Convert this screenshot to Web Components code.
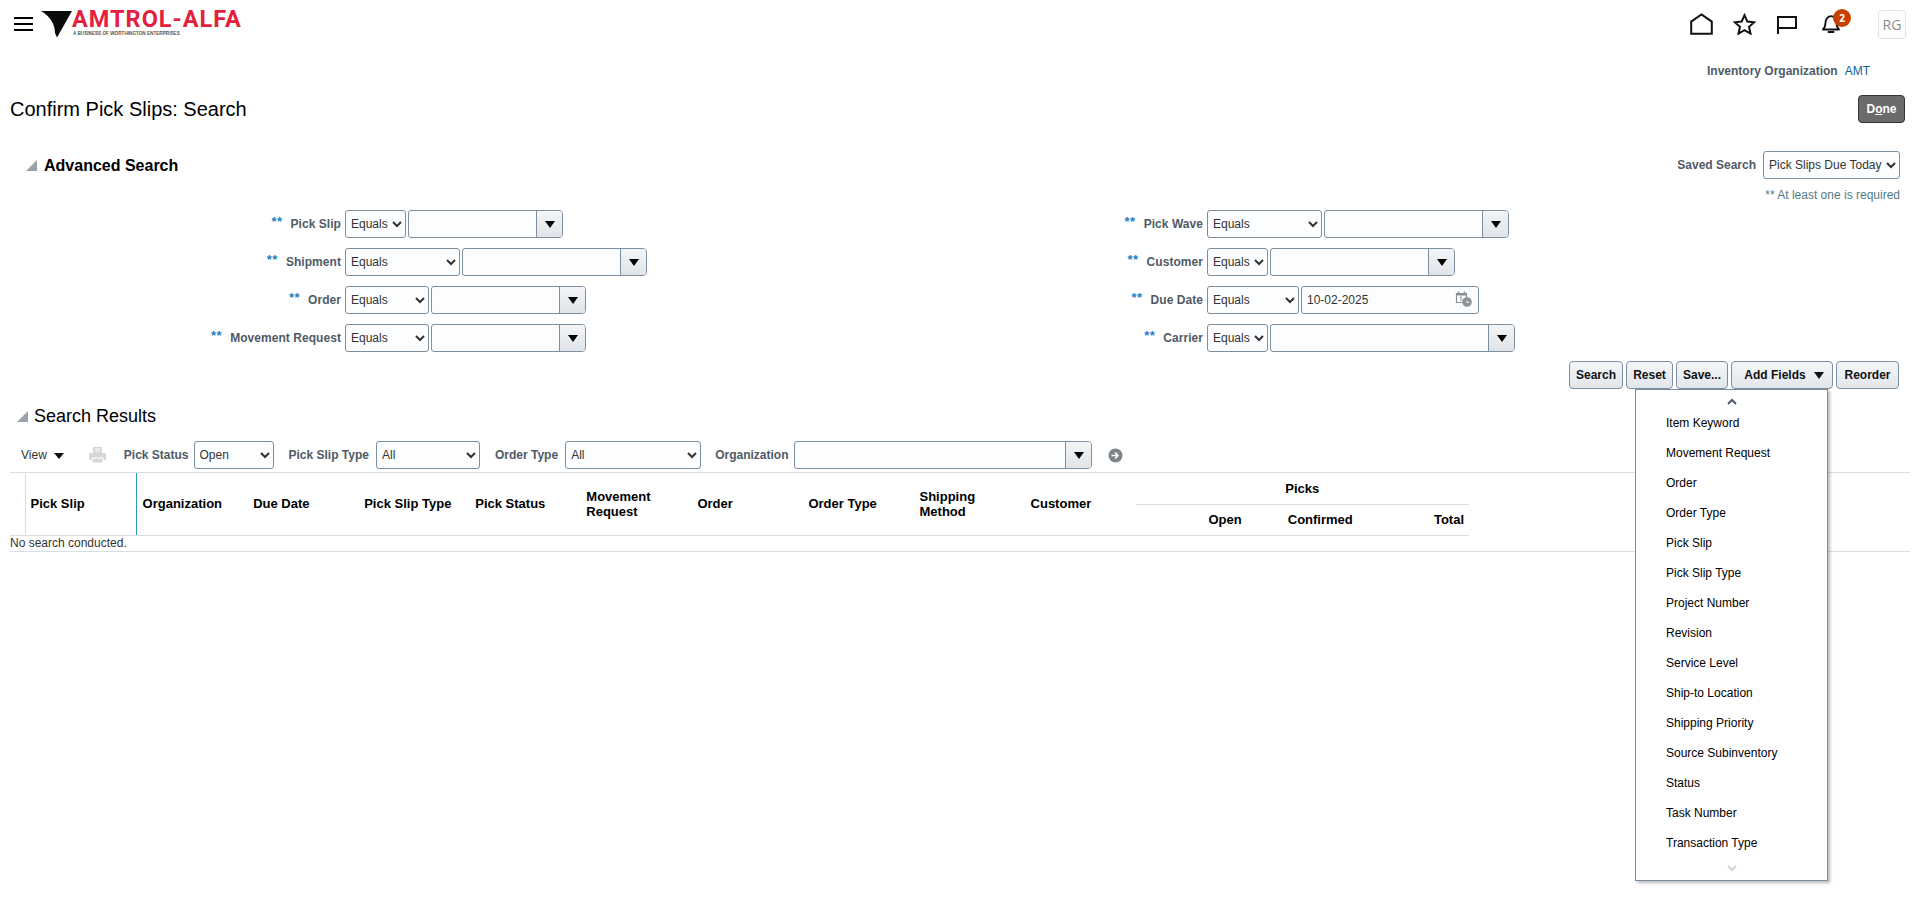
<!DOCTYPE html>
<html lang="en"><head><meta charset="utf-8"><title>Confirm Pick Slips: Search</title>
<style>
html,body{margin:0;padding:0;background:#fff;font-family:"Liberation Sans",Arial,sans-serif;font-size:12px;color:#000;}
body{height:899px;overflow:hidden;}
</style></head><body>
<x-page></x-page>
<script>
const CHEV=`<svg width="10" height="7" viewBox="0 0 10 7"><path d="M1 1l4 4 4-4" fill="none" stroke="currentColor" stroke-width="2"/></svg>`;
function def(name,css,html,init){
  customElements.define(name,class extends HTMLElement{
    constructor(){super();this.attachShadow({mode:'open'});}
    connectedCallback(){
      this.shadowRoot.innerHTML=`<style>${css}</style>`+(typeof html==='function'?html(this):html);
      if(init)init(this);
    }
  });
}
const A=(e,n,d='')=>e.hasAttribute(n)?e.getAttribute(n):d;

def('x-header',`
:host{display:flex;align-items:flex-start;height:48px;position:relative}
.burger{width:19px;height:14px;margin:17px 8px 0 14px;border-top:2px solid #000;border-bottom:2px solid #000;box-sizing:border-box;position:relative;flex:none}
.burger:after{content:"";position:absolute;left:0;right:0;top:4px;height:2px;background:#000}
.logo{display:flex;margin-top:10px;flex:none}
.mark{flex:none;margin-top:1px}
.brand{margin-left:0;display:flex;flex-direction:column}
.name{font:700 23.5px/18px Roboto,"Liberation Sans",sans-serif;color:#e4203f;letter-spacing:1px;height:19px;margin-left:-1px}
.sub{font:700 4.65px/6px "Liberation Sans",sans-serif;color:#555;letter-spacing:0;margin-top:2px;white-space:nowrap}
.spacer{flex:1}
.icons{display:flex;align-items:flex-start;margin-top:10px;padding-right:13px}
svg{display:block}
.i{flex:none}
.bell{position:relative;width:20px;margin-right:36px}
.badge{position:absolute;left:11px;top:-1px;width:18px;height:18px;border-radius:50%;background:#c74100;color:#fff;font:700 10px/18px "Open Sans",sans-serif;text-align:center}
.rg{width:28px;height:29px;box-sizing:border-box;border:1px solid #dfe4ea;border-radius:3px;color:#8c8c8c;font:14px/27px "Open Sans",sans-serif;text-align:center}
`,`
<div class="burger"></div>
<div class="logo">
 <svg class="mark" width="32" height="27" viewBox="0 0 32 27"><path d="M0 0H31L16 26.5 14 22C14 14 10 6 0 0Z" fill="#0b0b0b"/></svg>
 <div class="brand"><div class="name">AMTROL-ALFA</div><div class="sub">A BUSINESS OF WORTHINGTON ENTERPRISES</div></div>
</div>
<div class="spacer"></div>
<div class="icons">
 <svg class="i" style="margin:3px 20px 0 0" width="23" height="22" viewBox="0 0 23 22"><path d="M1.2 20.8V8.6L11.5 1.4 21.8 8.6V20.8Z" fill="none" stroke="#111" stroke-width="2"/></svg>
 <svg class="i" style="margin:3px 21px 0 0" width="23" height="22" viewBox="0 0 23 22"><path d="M11.5 2.2l2.8 6.3 6.9.7-5.2 4.6 1.5 6.8-6-3.5-6 3.5 1.5-6.8L1.8 9.2l6.9-.7z" fill="none" stroke="#111" stroke-width="2" stroke-linejoin="miter"/></svg>
 <svg class="i" style="margin:6px 25px 0 0" width="20" height="18" viewBox="0 0 20 18"><path d="M1 18V1H19V12H1" fill="none" stroke="#111" stroke-width="2"/></svg>
 <div class="bell">
  <svg style="margin-top:5px" width="18" height="19" viewBox="0 0 18 19"><path d="M1 14.5C3.2 12.5 3.5 10.5 3.5 7.5 3.5 4 6 1.2 9 1.2s5.5 2.8 5.5 6.3c0 3 .3 5 2.5 7Z" fill="none" stroke="#111" stroke-width="1.8" stroke-linejoin="round"/><path d="M6.5 17h5" stroke="#111" stroke-width="2" stroke-linecap="round"/></svg>
  <div class="badge">2</div>
 </div>
 <div class="rg">RG</div>
</div>`);

def('x-orgline',`
:host{display:flex;justify-content:flex-end;height:24px;margin-top:11px;padding-right:49px;line-height:24px;font-size:12px;white-space:nowrap}
b{color:#4f5a66;margin-right:7px}
span{color:#145c9e}`,
`<b>Inventory Organization</b><span>AMT</span>`);

def('x-titlebar',`
:host{display:flex;align-items:center;justify-content:space-between;height:28px;margin-top:12px;padding:0 14px 0 10px}
h1{margin:0;font:400 20px/28px "Liberation Sans",sans-serif;color:#000}`,
`<h1><slot></slot></h1><x-done></x-done>`);

def('x-done',`
:host{display:block;width:47px;height:28px;box-sizing:border-box;background:#6b6b6b;border:1px solid #333;border-radius:4px;color:#fff;font:700 12px/26px "Liberation Sans",sans-serif;text-align:center}
u{text-decoration:underline}`,`D<u>o</u>ne`);

def('x-disclosure',`
:host{display:flex;align-items:center;gap:var(--gap,7px)}
i{width:0;height:0;border-style:solid;border-width:0 0 11px 11px;border-color:transparent transparent #9aa1a8 transparent;flex:none;margin-left:var(--tri,0)}
span{white-space:nowrap;color:#000;padding-top:var(--pt,0)}`,
`<i></i><span><slot></slot></span>`);

def('x-select',`
:host{display:inline-block;width:var(--w,60px);height:28px;flex:none}
select{display:block;width:100%;height:28px;box-sizing:border-box;border:1px solid #7b8fa1;border-radius:3px;background:#fcfdfe;color:#333;font:12px "Liberation Sans",sans-serif;padding:0 0 0 1px;outline:0;margin:0}`,
e=>`<select><option>${A(e,'value','Equals')}</option></select>`);

def('x-lov',`
:host{display:inline-flex;width:var(--w,150px);height:28px;box-sizing:border-box;border:1px solid #7b8fa1;border-radius:3px 4px 4px 3px;background:#fcfdfe;flex:none;overflow:hidden}
.in{flex:1;min-width:0}
.btn{width:25px;flex:none;border-left:1px solid #7b8fa1;background:linear-gradient(#f3f5f7,#e0e4e8);display:flex;align-items:center;justify-content:center}
.btn i{width:0;height:0;border-style:solid;border-width:7px 5.5px 0;border-color:#000 transparent transparent;margin-top:1px}`,
`<div class="in"></div><div class="btn"><i></i></div>`);

def('x-date',`
:host{display:inline-flex;align-items:center;justify-content:space-between;width:var(--w,178px);height:28px;box-sizing:border-box;border:1px solid #7b8fa1;border-radius:3px;background:#fcfdfe;flex:none;padding:0 6px 0 5px;color:#333;font-size:12px}`,
`<span><slot></slot></span>
<svg width="17" height="17" viewBox="0 0 17 17" style="margin-top:-3px"><path d="M1.5 3.5h10v9h-10z" fill="none" stroke="#8a8f94" stroke-width="1.2"/><path d="M1.5 3.5h10v2h-10z" fill="#8a8f94"/><path d="M3.5 1.5v2.5M9.5 1.5v2.5" stroke="#8a8f94" stroke-width="1.4"/><path d="M5 7.4l1-.6v4.2" fill="none" stroke="#8a8f94" stroke-width="1"/><circle cx="12" cy="12" r="4.8" fill="#8f9499"/><path d="M12 10.6v1.8h2" fill="none" stroke="#fff" stroke-width=".9"/></svg>`);

def('x-field',`
:host{display:flex;align-items:center;height:28px;gap:2px}
.lab{width:341px;margin-right:2px;flex:none;display:flex;justify-content:flex-end;align-items:center;white-space:nowrap;font-weight:700;font-size:12px;color:#4f5a66;letter-spacing:.05px}
.st{color:#1f7fc4;font-size:13px;margin-right:8px;position:relative;bottom:3px;letter-spacing:.5px}`,
e=>`<div class="lab"><span class="st">**</span><span>${A(e,'label')}</span></div><slot></slot>`);

def('x-btn',`
:host{display:block;flex:none;height:28px;box-sizing:border-box;border:1px solid #7b8fa1;border-radius:4px;background:linear-gradient(#f4f6f8,#e2e6ea);font:700 12px/26px "Liberation Sans",sans-serif;color:#111;text-align:center;white-space:nowrap}`,
`<slot></slot>`);

def('x-menu',`
:host{position:absolute;right:91px;top:28px;width:193px;height:492px;box-sizing:border-box;border:1px solid #7b8fa1;background:#fff;box-shadow:2px 2px 3px rgba(0,0,0,.28);display:flex;flex-direction:column;align-items:stretch;z-index:5;color:#000;font-size:12px}
.ch{height:18px;display:flex;align-items:center;justify-content:center;flex:none}
.top{margin-top:2px;color:#4f5a66;height:18px}
.bot{color:#cfd3d7;margin-top:auto;margin-bottom:3px}
.list{display:flex;flex-direction:column;padding-left:30px;margin-top:-2px}
.it{height:30px;line-height:30px;white-space:nowrap}`,
()=>`<div class="ch top"><svg width="10" height="7" viewBox="0 0 10 7"><path d="M1 6l4-4 4 4" fill="none" stroke="currentColor" stroke-width="2"/></svg></div>
<div class="list">${['Item Keyword','Movement Request','Order','Order Type','Pick Slip','Pick Slip Type','Project Number','Revision','Service Level','Ship-to Location','Shipping Priority','Source Subinventory','Status','Task Number','Transaction Type'].map(t=>`<div class="it">${t}</div>`).join('')}</div>
<div class="ch bot">${CHEV}</div>`);

def('x-actions',`
:host{display:flex;justify-content:flex-end;gap:3px;height:28px;margin-top:9px;padding-right:20px;position:relative}
.tri{display:inline-block;width:0;height:0;border-style:solid;border-width:7px 5.5px 0;border-color:#111 transparent transparent;margin-left:8px;vertical-align:0}`,
`<x-btn style="width:54px">Search</x-btn><x-btn style="width:47px">Reset</x-btn><x-btn style="width:52px">Save...</x-btn><x-btn style="width:102px;padding-left:4px">Add Fields<span class="tri"></span></x-btn><x-btn style="width:63px">Reorder</x-btn><x-menu></x-menu>`);

def('x-advanced',`
:host{display:block;margin-top:28px}
.head{display:flex;align-items:center;justify-content:space-between;height:28px;padding:0 19px 0 26px}
x-disclosure{font:700 16px "Liberation Sans",sans-serif;--gap:7px;--pt:2px}
.saved{display:flex;align-items:center;gap:7px}
.saved b{color:#4f5a66}
.req{height:16px;margin-top:8px;padding-right:19px;text-align:right;color:#527a8c;line-height:16px}
.grid{display:grid;grid-template-columns:862px 1fr;row-gap:10px;margin-top:7px}`,
`<div class="head"><x-disclosure>Advanced Search</x-disclosure>
 <div class="saved"><b>Saved Search</b><x-select style="--w:137px" value="Pick Slips Due Today"></x-select></div></div>
<div class="req">** At least one is required</div>
<div class="grid">
 <x-field label="Pick Slip"><x-select style="--w:61px"></x-select><x-lov style="--w:155px"></x-lov></x-field>
 <x-field label="Pick Wave"><x-select style="--w:115px"></x-select><x-lov style="--w:185px"></x-lov></x-field>
 <x-field label="Shipment"><x-select style="--w:115px"></x-select><x-lov style="--w:185px"></x-lov></x-field>
 <x-field label="Customer"><x-select style="--w:61px"></x-select><x-lov style="--w:185px"></x-lov></x-field>
 <x-field label="Order"><x-select style="--w:84px"></x-select><x-lov style="--w:155px"></x-lov></x-field>
 <x-field label="Due Date"><x-select style="--w:92px"></x-select><x-date style="--w:178px">10-02-2025</x-date></x-field>
 <x-field label="Movement Request"><x-select style="--w:84px"></x-select><x-lov style="--w:155px"></x-lov></x-field>
 <x-field label="Carrier"><x-select style="--w:61px"></x-select><x-lov style="--w:245px"></x-lov></x-field>
</div>
<x-actions></x-actions>`);

def('x-toolbar',`
:host{display:flex;align-items:center;height:28px;margin:14px 0 0 21px;font-size:12px;white-space:nowrap}
b{color:#4f5a66;flex:none}
.view{color:#333;flex:none;display:flex;align-items:center}
.tri{display:inline-block;width:0;height:0;border-style:solid;border-width:6px 5px 0;border-color:#111 transparent transparent;margin-left:7px;margin-top:1px}
svg{flex:none}`,
`<span class="view">View<span class="tri"></span></span>
<svg style="margin:0 18px 0 25px" width="17" height="18" viewBox="0 0 17 18"><path d="M4 1h9v6H4z" fill="#d4d7da"/><path d="M6 3h5M6 5h5" stroke="#fff"/><rect x="0" y="7" width="17" height="7" rx="1" fill="#d4d7da"/><path d="M3 12h11v5H3z" fill="#d4d7da" stroke="#fff"/></svg>
<b style="margin-right:5px">Pick Status</b><x-select style="--w:80px" value="Open"></x-select>
<b style="margin:0 7px 0 15px">Pick Slip Type</b><x-select style="--w:104px" value="All"></x-select>
<b style="margin:0 7px 0 15px">Order Type</b><x-select style="--w:136px" value="All"></x-select>
<b style="margin:0 6px 0 14px">Organization</b><x-lov style="--w:298px"></x-lov>
<svg style="margin-left:16px" width="15" height="15" viewBox="0 0 15 15"><circle cx="7.5" cy="7.5" r="7" fill="#7f8489"/><path d="M3.5 7.5h6M7 4.5l3 3-3 3" fill="none" stroke="#fff" stroke-width="1.6"/></svg>`);

def('x-results',`
:host{display:block}
x-disclosure{display:flex;margin:16px 0 0 17px;height:22px;font:18px/22px "Liberation Sans",sans-serif;--gap:6px}
.tw{margin:3px 9px 0 10px}
.tw-inner{border-top:1px solid #d6dfe6;border-bottom:1px solid #d6dfe6}
table{border-collapse:collapse;table-layout:fixed;width:1459px;font:700 13px/15px "Liberation Sans",sans-serif;color:#000}
th{padding:0 0 0 6px;text-align:left;font-weight:700;vertical-align:middle;border-bottom:1px solid #d6dfe6;height:31px;box-sizing:border-box}
.corner{border-right:1px solid #d6dfe6;}
.frozen{border-right:1px solid #2b9ab3;padding-left:5px}
.group{text-align:center;border-bottom:1px solid #d6dfe6;padding:0}
.num{text-align:right;padding:0 5px 0 0}
.empty{font:12px/15px "Liberation Sans",sans-serif;color:#333;height:15px}`,
`<x-disclosure>Search Results</x-disclosure>
<x-toolbar></x-toolbar>
<div class="tw"><div class="tw-inner">
<table><colgroup><col style="width:15px">${'<col style="width:111px">'.repeat(13)}</colgroup>
<thead>
<tr><th class="corner" rowspan="2"></th><th class="frozen" rowspan="2">Pick Slip</th><th rowspan="2">Organization</th><th rowspan="2">Due Date</th><th rowspan="2">Pick Slip Type</th><th rowspan="2">Pick Status</th><th rowspan="2">Movement<br>Request</th><th rowspan="2">Order</th><th rowspan="2">Order Type</th><th rowspan="2">Shipping<br>Method</th><th rowspan="2">Customer</th><th class="group" colspan="3">Picks</th></tr>
<tr><th class="num">Open</th><th class="num">Confirmed</th><th class="num">Total</th></tr>
</thead></table>
<div class="empty">No search conducted.</div>
</div></div>`);

def('x-page',`:host{display:block;width:1919px;height:899px;overflow:hidden;position:relative}`,
`<x-header></x-header><x-orgline></x-orgline><x-titlebar>Confirm Pick Slips: Search</x-titlebar><x-advanced></x-advanced><x-results></x-results>`);
</script>
</body></html>
